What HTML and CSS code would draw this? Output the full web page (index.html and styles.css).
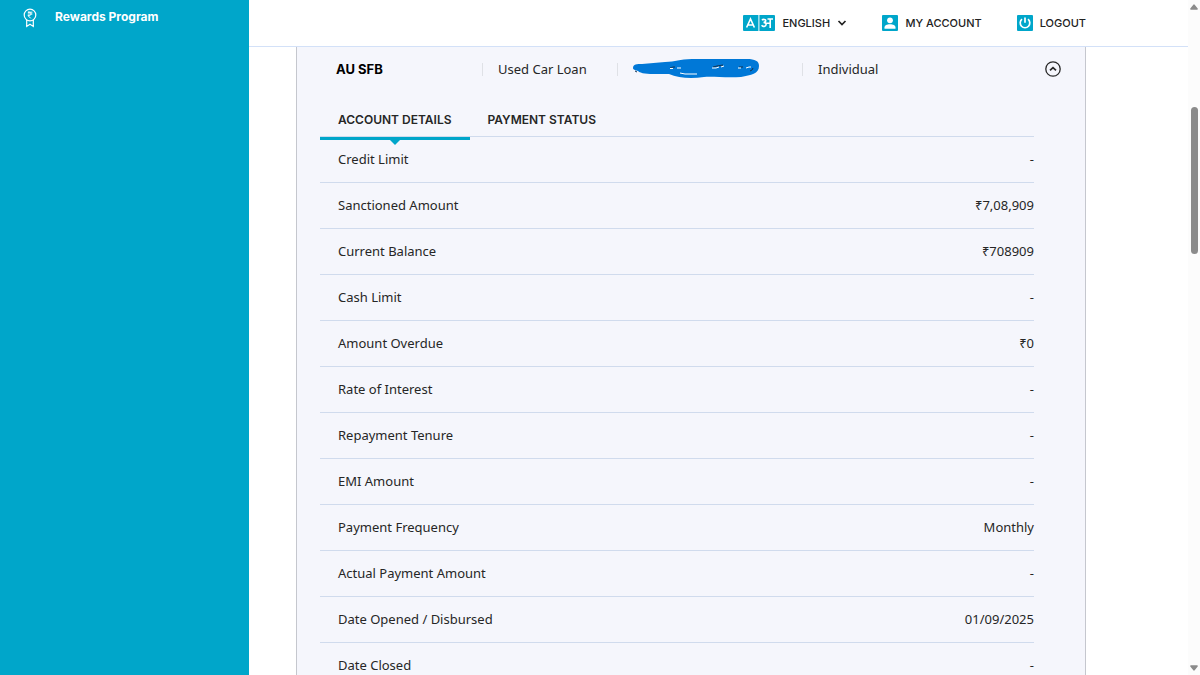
FILE: index.html
```html
<!DOCTYPE html>
<html lang="en">
<head>
<meta charset="utf-8">
<meta name="viewport" content="width=device-width, initial-scale=1">
<title>Account Details</title>
<link rel="stylesheet" href="styles.css">
</head>
<body>
<div class="app">
  <nav class="sidebar" aria-label="Main">
    <a class="side-link" href="#">
      <svg class="side-icon" width="14" height="20" viewBox="0 0 14 20" fill="none" stroke="currentColor" stroke-width="1.2" aria-hidden="true">
        <circle cx="7" cy="7" r="5.8"/>
        <path d="M3.7 12v6.4L7 16.2l3.3 2.2V12"/>
        <path d="M4.8 4.2h4.6M4.8 6h4.6M5 4.2h1.2c2.4 0 2.4 3.4 0 3.4H5l2.8 2.8" stroke-width="1"/>
      </svg>
      <span>Rewards Program</span>
    </a>
  </nav>
  <div class="page">
    <header class="topbar">
      <label class="top-item">
        <svg width="32" height="16" viewBox="0 0 32 16" aria-hidden="true">
          <path d="M1 0h14.4v16H1a1 1 0 0 1-1-1V1a1 1 0 0 1 1-1zM16.4 0H31a1 1 0 0 1 1 1v14a1 1 0 0 1-1 1H16.4z" fill="#00a6ca"/>
          <g fill="none" stroke="#fff" stroke-width="1.6">
            <path d="M3.6 12.5 7.5 4l3.9 8.500M5 10h5"/>
            <path d="M19 5.200c1-1.300 4-1 3.700.8-.2 1.300-1.200 1.500-2.200 1.500 1.800 0 2.700.7 2.600 2-.2 2.300-3 2.500-4.500.700M23 8.200h4M27.200 4v9M24.500 4H30"/>
          </g>
        </svg>
        <select class="language" aria-label="Language"><option>ENGLISH</option></select>
        <svg width="10" height="8" viewBox="0 0 10 8" fill="none" stroke="#222" stroke-width="1.700" aria-hidden="true"><path d="M1.500 2 5 5.500 8.500 2"/></svg>
      </label>
      <a class="top-item" href="#">
        <svg width="16" height="16" viewBox="0 0 16 16" aria-hidden="true"><rect width="16" height="16" rx="1" fill="#00a6ca"/><circle cx="8" cy="5.300" r="2.900" fill="#fff"/><path d="M2.500 13.800v-1.300c0-2 2.500-3.200 5.500-3.200s5.500 1.200 5.500 3.200v1.300z" fill="#fff"/></svg>
        <span>MY ACCOUNT</span>
      </a>
      <a class="top-item" href="#">
        <svg width="16" height="16" viewBox="0 0 16 16" aria-hidden="true"><rect width="16" height="16" rx="1" fill="#00a6ca"/><path d="M5 4.200a4.800 4.800 0 1 0 6 0M8 2.500v5.300" fill="none" stroke="#fff" stroke-width="1.700"/></svg>
        <span>LOGOUT</span>
      </a>
    </header>
    <main class="panel">
      <div class="summary">
        <strong class="lender">AU SFB</strong>
        <span class="fact">Used Car Loan</span>
        <span class="fact">
          <svg width="128" height="22" viewBox="0 0 128 22" role="img" aria-label="Hidden account number">
            <path d="M0 10C0 6 4 6 9 6l23-2C43 4 46 1 59 1h55c8 0 12 2 12 7 0 8-8 9-18 11-16 1-29-1-37 0-13 2-26 1-35-3-13 0-27 1-31-3-2-1-5-1-5-3z" fill="#0078d7"/>
            <g fill="none" stroke="#17334d" stroke-width="1"><path d="M37 10c2-1 4-1 5-1M80 9l4-1 6-1M106 9h4M117 13l2-1 1-2M2 13l2 1"/></g>
            <g fill="none" stroke="#fff" stroke-width="1"><path d="M37 10.500h3M44 10h4M47 15l5 1h12M79 10h4l3-1M88 9l3-1M105 10h3M113 10l3-1h2"/></g>
          </svg>
        </span>
        <span class="fact">Individual</span>
        <button class="toggle" type="button" aria-expanded="true" aria-label="Collapse account">
          <svg width="16" height="16" viewBox="0 0 16 16" fill="none" stroke="#292929" aria-hidden="true"><circle cx="8" cy="8" r="7.200" stroke-width="1.300"/><path d="M5 9.300 8 6.600l3 2.700" stroke-width="1.700"/></svg>
        </button>
      </div>
      <div class="details">
        <div class="tabs" role="tablist">
          <button class="tab active" type="button" role="tab" aria-selected="true">ACCOUNT DETAILS</button>
          <button class="tab" type="button" role="tab" aria-selected="false">PAYMENT STATUS</button>
        </div>
        <table class="rows">
          <tbody>
            <tr><th scope="row">Credit Limit</th><td>-</td></tr>
            <tr><th scope="row">Sanctioned Amount</th><td>₹7,08,909</td></tr>
            <tr><th scope="row">Current Balance</th><td>₹708909</td></tr>
            <tr><th scope="row">Cash Limit</th><td>-</td></tr>
            <tr><th scope="row">Amount Overdue</th><td>₹0</td></tr>
            <tr><th scope="row">Rate of Interest</th><td>-</td></tr>
            <tr><th scope="row">Repayment Tenure</th><td>-</td></tr>
            <tr><th scope="row">EMI Amount</th><td>-</td></tr>
            <tr><th scope="row">Payment Frequency</th><td>Monthly</td></tr>
            <tr><th scope="row">Actual Payment Amount</th><td>-</td></tr>
            <tr><th scope="row">Date Opened / Disbursed</th><td>01/09/2025</td></tr>
            <tr><th scope="row">Date Closed</th><td>-</td></tr>
          </tbody>
        </table>
      </div>
    </main>
  </div>
  <div class="scrollbar" aria-hidden="true">
    <svg width="8" height="6" viewBox="0 0 8 6"><path d="M3.300.7 0.300 4.500q-.5 1.200.7 1.200h6q1.200 0 .7-1.200L4.700.7q-.7-.7-1.400 0z" fill="#8b8b8b"/></svg>
    <div class="track"><div class="thumb"></div></div>
    <svg width="8" height="6" viewBox="0 0 8 6"><path d="M3.300 5.300.3 1.500Q-.2.300 1 .3h6q1.200 0 .7 1.200l-3 3.800q-.7.700-1.400 0z" fill="#8b8b8b"/></svg>
  </div>
</div>
</body>
</html>
```
FILE: styles.css
```css
* { box-sizing: border-box; }

body {
  margin: 0;
  background: #fff;
  color: #262626;
  font: 13px/20px "Noto Sans", sans-serif;
}

a { color: inherit; text-decoration: none; }
svg { display: block; flex: none; }
button, select { font: inherit; color: inherit; border: 0; background: none; padding: 0; margin: 0; cursor: pointer; }

.app { display: flex; height: 100vh; overflow: hidden; }

.sidebar { flex: 0 0 249px; background: #00a6ca; color: #fff; padding: 8px 23px; }
.side-link { display: flex; align-items: flex-start; gap: 18px; font: 700 12px/18px Inter, sans-serif; }

.page { flex: 1; min-width: 0; }

.topbar {
  display: flex;
  justify-content: flex-end;
  gap: 35px;
  height: 47px;
  padding-right: 102px;
  border-bottom: 1px solid #d3e1f8;
  font: 500 11px/16px Inter, sans-serif;
  color: #222;
}
.top-item { display: flex; align-items: center; gap: 7px; }
.language { appearance: none; }

.panel {
  margin: 0 102px 0 47px;
  padding: 0 24px 0 23px;
  border: solid #c5c7ce;
  border-width: 0 1px;
  background: #f5f6fc;
}

.summary {
  display: grid;
  grid-template-columns: 146px 135px 185px 1fr auto;
  align-items: center;
  height: 44px;
  padding-left: 16px;
}
.lender { font: 700 13px/20px Inter, sans-serif; color: #000; }
.fact { display: flex; align-items: center; height: 13px; padding-left: 15px; border-left: 1px solid #dfe1e6; white-space: nowrap; }
.toggle { border-radius: 50%; }

.details { margin-right: 27px; }

.tabs { display: flex; height: 46px; border-bottom: 1px solid #d0dbed; }
.tab { position: relative; height: 49px; padding: 19px 18px 7px; font: 600 12px/20px Inter, sans-serif; border-bottom: 3px solid transparent; }
.tab.active { border-bottom-color: #00a6ca; }
.tab.active::after {
  content: "";
  position: absolute;
  top: 100%;
  left: 50%;
  margin: 2px 0 0 -6px;
  border: 6px solid transparent;
  border-top-color: #00a6ca;
  border-bottom: 0;
}

.rows { width: 100%; border-collapse: separate; border-spacing: 0; }
.rows th, .rows td { height: 46px; padding: 0 0 1px; border-bottom: 1px solid #d0dbed; font-weight: 400; }
.rows th { padding-left: 18px; text-align: left; }
.rows td { text-align: right; }

.scrollbar { flex: 0 0 12px; display: flex; flex-direction: column; align-items: center; padding: 4px 0; background: #fcfcfc; }
.track { flex: 1; width: 7px; padding-top: 97px; }
.thumb { height: 147px; border-radius: 4px; background: #8b8b8b; }
```
